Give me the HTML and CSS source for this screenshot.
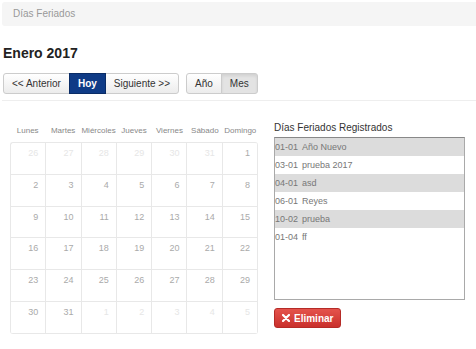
FILE: index.html
```html
<!DOCTYPE html>
<html lang="es">
<head>
    <meta charset="UTF-8">
    <title>Días Feriados</title>
    <link rel="stylesheet" href="styles.css">
</head>
<body>
    <div class="page">
        <div class="breadcrumb">Días Feriados</div>

        <h2 class="title">Enero 2017</h2>

        <div class="toolbar">
            <div class="btn-group">
                <button class="btn">&lt;&lt; Anterior</button>
                <button class="btn btn-primary">Hoy</button>
                <button class="btn">Siguiente &gt;&gt;</button>
            </div>
            <div class="btn-group">
                <button class="btn">Año</button>
                <button class="btn active">Mes</button>
            </div>
        </div>

        <div class="divider"></div>

        <div class="content">
            <div class="calendar">
                <div class="weekdays">
                    <span>Lunes</span><span>Martes</span><span>Miércoles</span><span>Jueves</span><span>Viernes</span><span>Sábado</span><span>Domingo</span>
                </div>
                <div class="days">
                    <div class="day other">26</div><div class="day other">27</div><div class="day other">28</div><div class="day other">29</div><div class="day other">30</div><div class="day other">31</div><div class="day">1</div>
                    <div class="day">2</div><div class="day">3</div><div class="day">4</div><div class="day">5</div><div class="day">6</div><div class="day">7</div><div class="day">8</div>
                    <div class="day">9</div><div class="day">10</div><div class="day">11</div><div class="day">12</div><div class="day">13</div><div class="day">14</div><div class="day">15</div>
                    <div class="day">16</div><div class="day">17</div><div class="day">18</div><div class="day">19</div><div class="day">20</div><div class="day">21</div><div class="day">22</div>
                    <div class="day">23</div><div class="day">24</div><div class="day">25</div><div class="day">26</div><div class="day">27</div><div class="day">28</div><div class="day">29</div>
                    <div class="day">30</div><div class="day">31</div><div class="day other">1</div><div class="day other">2</div><div class="day other">3</div><div class="day other">4</div><div class="day other">5</div>
                </div>
            </div>

            <div class="holidays">
                <h3>Días Feriados Registrados</h3>
                <div class="holiday-list">
                    <div class="holiday"><span class="date">01-01</span>Año Nuevo</div>
                    <div class="holiday"><span class="date">03-01</span>prueba 2017</div>
                    <div class="holiday"><span class="date">04-01</span>asd</div>
                    <div class="holiday"><span class="date">06-01</span>Reyes</div>
                    <div class="holiday"><span class="date">10-02</span>prueba</div>
                    <div class="holiday"><span class="date">01-04</span>ff</div>
                </div>
                <button class="btn btn-danger">
                    <svg width="8" height="8" viewBox="0 0 8 8"><path d="M1 1 L7 7 M7 1 L1 7" stroke="#fff" stroke-width="2.2" stroke-linecap="round"/></svg>
                    Eliminar
                </button>
            </div>
        </div>
    </div>
</body>
</html>
```

FILE: styles.css
```css
body {
    margin: 0;
    font-family: 'Liberation Sans', Arial, sans-serif;
    color: #333;
    background: #fff;
}

.page {
    padding: 2px 0 0 2px;
}

.breadcrumb {
    background: #f5f5f5;
    height: 24px;
    line-height: 24px;
    padding-left: 11px;
    font-size: 10px;
    color: #999;
    border-radius: 3px 0 0 3px;
}

.title {
    margin: 19px 0 0 1px;
    font-size: 14px;
    line-height: 17px;
    font-weight: bold;
    color: #222;
}

.toolbar {
    display: flex;
    gap: 7px;
    margin-top: 11px;
    padding-left: 1px;
}

.btn-group {
    display: flex;
}

.btn {
    height: 21px;
    padding: 0 8px;
    font-family: inherit;
    font-size: 10px;
    color: #333;
    background: linear-gradient(#fff, #ececec);
    border: 1px solid #ccc;
    border-radius: 0;
    cursor: pointer;
}

.btn-group .btn + .btn {
    margin-left: -1px;
}

.btn-group .btn:first-child {
    border-radius: 3px 0 0 3px;
}

.btn-group .btn:last-child {
    border-radius: 0 3px 3px 0;
}

.btn.active {
    background: #e3e3e3;
    box-shadow: inset 0 2px 3px rgba(0, 0, 0, 0.08);
}

.btn-primary {
    background: #0f3b86;
    border-color: #0a2c66;
    color: #fff;
    font-weight: bold;
    position: relative;
}

.divider {
    margin-top: 6px;
    border-top: 1px solid #eee;
}

.content {
    display: flex;
    align-items: flex-start;
    gap: 16px;
}

.calendar {
    width: 248px;
    margin: 21px 0 0 8px;
}

.weekdays {
    display: grid;
    grid-template-columns: repeat(7, 1fr);
    height: 20px;
    line-height: 18px;
    font-size: 8px;
    color: #888;
    text-align: center;
    white-space: nowrap;
}

.days {
    display: grid;
    grid-template-columns: repeat(7, 1fr);
    grid-auto-rows: 31.8px;
    border: 1px solid #e8e8e8;
    border-right: 0;
    border-bottom: 0;
    border-radius: 3px;
    overflow: hidden;
}

.day {
    border-right: 1px solid #e8e8e8;
    border-bottom: 1px solid #e8e8e8;
    text-align: right;
    padding: 4px 7px 0 0;
    font-size: 9px;
    line-height: 12px;
    color: #aaa;
}

.day.other {
    color: #e6e6e6;
}

.holidays {
    margin-top: 20px;
    width: 191px;
}

.holidays h3 {
    margin: 0;
    font-size: 10px;
    line-height: 14px;
    font-weight: normal;
    color: #333;
}

.holiday-list {
    margin-top: 2px;
    height: 163px;
    box-sizing: border-box;
    border: 1px solid #a9a9a9;
    border-top-color: #888;
}

.holiday {
    height: 18px;
    line-height: 18px;
    font-size: 9px;
    color: #777;
    white-space: nowrap;
}

.holiday:nth-child(odd) {
    background: #dcdcdc;
}

.holiday .date {
    display: inline-block;
    width: 27px;
}

.btn-danger {
    margin-top: 8px;
    height: 20px;
    padding: 0 7px;
    display: flex;
    align-items: center;
    gap: 4px;
    background: linear-gradient(#e4534c, #c9302c);
    border: 1px solid #b52b27;
    border-radius: 3px;
    color: #fff;
    font-weight: bold;
    font-size: 10px;
}
```
